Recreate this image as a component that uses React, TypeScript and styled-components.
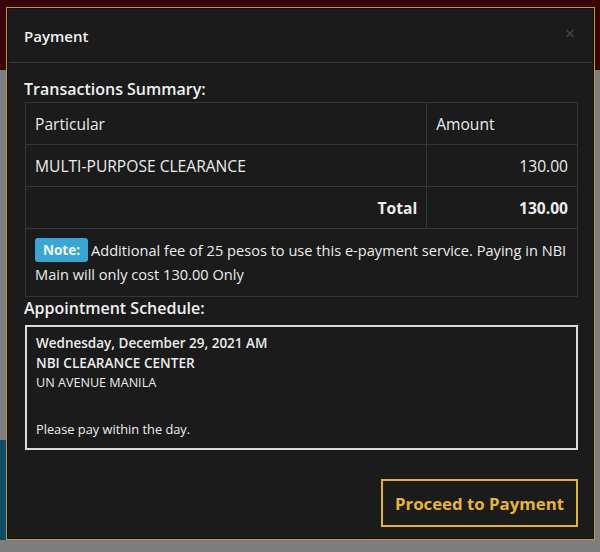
import React from "react";
import styled, { createGlobalStyle } from "styled-components";

const GlobalStyle = createGlobalStyle`
  html, body {
    margin: 0;
    padding: 0;
  }
  body {
    font-family: "Open Sans", "Noto Sans", sans-serif;
    background: linear-gradient(
      to bottom,
      #3a0509 0px,
      #3a0509 70px,
      #7d7d7d 70px,
      #7d7d7d 100%
    );
    min-height: 552px;
  }
`;

const Backdrop = styled.div`
  width: 600px;
  height: 552px;
  box-sizing: border-box;
  padding: 7px 5px 12px 6px;
  position: relative;
  overflow: hidden;

  &::before {
    content: "";
    position: absolute;
    left: 0;
    top: 440px;
    width: 8px;
    height: 100px;
    background: #0f4d66;
  }
`;

const Modal = styled.div`
  position: relative;
  width: 589px;
  height: 533px;
  box-sizing: border-box;
  background: #1b1b1b;
  border: 1px solid #c4963c;
  box-shadow: inset 0 0 0 1px #111;
  color: #ececec;
  display: flex;
  flex-direction: column;
`;

const Header = styled.div`
  flex-shrink: 0;
  box-sizing: border-box;
  height: 55px;
  margin: 0 2px;
  padding: 2px 15px 0 15px;
  display: flex;
  align-items: center;
  justify-content: space-between;
  border-bottom: 1px solid #383838;
`;

const Title = styled.h4`
  margin: 0;
  font-size: 15px;
  font-weight: 600;
  color: #f2f2f2;
`;

const Close = styled.span`
  font-size: 18px;
  color: #4a4a4a;
  line-height: 1;
  margin-right: 2px;
  margin-top: -6px;
`;

const Body = styled.div`
  flex-shrink: 0;
  padding: 15px 17px 0 17px;
  display: flex;
  flex-direction: column;
`;

const SectionTitle = styled.div<{ gap: number }>`
  font-size: 16px;
  font-weight: 600;
  line-height: 22px;
  color: #f0f0f0;
  margin-bottom: ${(p) => p.gap}px;
`;

const Table = styled.table`
  width: 553px;
  margin-left: 1px;
  border-collapse: collapse;
  font-size: 15.6px;

  td {
    border: 1px solid #363636;
    padding: 0 9px;
    height: 41px;
    color: #ececec;
  }
`;

const Cell = styled.td<{ right?: boolean; bold?: boolean }>`
  text-align: ${(p) => (p.right ? "right" : "left")};
  font-weight: ${(p) => (p.bold ? 700 : 400)};
`;

const NoteCell = styled.td`
  && {
    height: auto;
    padding: 9px 9px 10px 9px;
    line-height: 24px;
    font-size: 14.6px;
  }
`;

const Badge = styled.span`
  display: inline-block;
  background: #39a6d4;
  color: #f4f4f4;
  font-weight: 700;
  font-size: 13.5px;
  line-height: 24px;
  padding: 0 8px 0 8px;
  border-radius: 3px;
  margin-right: 3px;
  vertical-align: top;
`;

const ScheduleBox = styled.div`
  width: 553px;
  margin-left: 1px;
  height: 125px;
  box-sizing: border-box;
  border: 2px solid #dcdcdc;
  padding: 6px 9px;
  font-size: 13px;
`;

const Line = styled.div<{ bold?: boolean; size?: number; h?: number }>`
  font-weight: ${(p) => (p.bold ? 600 : 400)};
  font-size: ${(p) => p.size ?? 13}px;
  line-height: ${(p) => p.h ?? 20}px;
  color: #ececec;
`;

const Footer = styled.div`
  display: flex;
  justify-content: flex-end;
  padding: 29px 16px 0 17px;
`;

const ProceedButton = styled.button`
  width: 197px;
  height: 48px;
  background: transparent;
  border: 2px solid #e6b12c;
  color: #e8b630;
  font-family: "Open Sans", "Noto Sans", sans-serif;
  font-size: 16.8px;
  font-weight: 700;
  cursor: pointer;
`;

export default function App() {
  return (
    <>
      <GlobalStyle />
      <Backdrop>
        <Modal>
          <Header>
            <Title>Payment</Title>
            <Close>×</Close>
          </Header>
          <Body>
            <SectionTitle gap={2}>Transactions Summary:</SectionTitle>
            <Table>
              <colgroup>
                <col style={{ width: 402 }} />
                <col style={{ width: 151 }} />
              </colgroup>
              <tbody>
                <tr>
                  <Cell>Particular</Cell>
                  <Cell>Amount</Cell>
                </tr>
                <tr>
                  <Cell>MULTI-PURPOSE CLEARANCE</Cell>
                  <Cell right>130.00</Cell>
                </tr>
                <tr>
                  <Cell right bold>
                    Total
                  </Cell>
                  <Cell right bold>
                    130.00
                  </Cell>
                </tr>
                <tr>
                  <NoteCell colSpan={2}>
                    <Badge>Note:</Badge>
                    Additional fee of 25 pesos to use this e-payment service.
                    Paying in NBI Main will only cost 130.00 Only
                  </NoteCell>
                </tr>
              </tbody>
            </Table>
            <SectionTitle gap={6}>Appointment Schedule:</SectionTitle>
            <ScheduleBox>
              <Line bold size={13.5} h={20}>
                Wednesday, December 29, 2021 AM
              </Line>
              <Line bold size={13.6} h={19}>
                NBI CLEARANCE CENTER
              </Line>
              <Line size={12.6} h={22}>
                UN AVENUE MANILA
              </Line>
              <Line h={24}>&nbsp;</Line>
              <Line size={12.8} h={22}>
                Please pay within the day.
              </Line>
            </ScheduleBox>
          </Body>
          <Footer>
            <ProceedButton>Proceed to Payment</ProceedButton>
          </Footer>
        </Modal>
      </Backdrop>
    </>
  );
}
